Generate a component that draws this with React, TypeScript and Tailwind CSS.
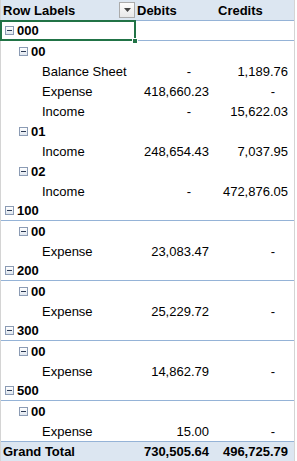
import React from 'react';

type Row = { label: string; level: 0 | 1 | 2; d?: string; c?: string; line?: boolean };

const ROWS: Row[] = [
  { label: '000', level: 0, line: true },
  { label: '00', level: 1 },
  { label: 'Balance Sheet', level: 2, d: '-', c: '1,189.76' },
  { label: 'Expense', level: 2, d: '418,660.23', c: '-' },
  { label: 'Income', level: 2, d: '-', c: '15,622.03' },
  { label: '01', level: 1 },
  { label: 'Income', level: 2, d: '248,654.43', c: '7,037.95' },
  { label: '02', level: 1 },
  { label: 'Income', level: 2, d: '-', c: '472,876.05' },
  { label: '100', level: 0, line: true },
  { label: '00', level: 1 },
  { label: 'Expense', level: 2, d: '23,083.47', c: '-' },
  { label: '200', level: 0, line: true },
  { label: '00', level: 1 },
  { label: 'Expense', level: 2, d: '25,229.72', c: '-' },
  { label: '300', level: 0, line: true },
  { label: '00', level: 1 },
  { label: 'Expense', level: 2, d: '14,862.79', c: '-' },
  { label: '500', level: 0, line: true },
  { label: '00', level: 1 },
  { label: 'Expense', level: 2, d: '15.00', c: '-' },
];

function Minus() {
  return (
    <span className="w-[9px] h-[9px] border border-[#8b9bb4] bg-gradient-to-b from-[#ffffff] to-[#dfe6ef] flex items-center justify-center shrink-0">
      <span className="w-[5px] h-px bg-[#2b3a55]" />
    </span>
  );
}

// accounting format: dash sits further in than the numbers
function Value({ v, bold, dashPad }: { v?: string; bold?: boolean; dashPad: string }) {
  if (!v) return <div />;
  return (
    <div className={`flex items-center justify-end ${v === '-' ? dashPad : 'pr-[6px]'} ${bold ? 'font-bold' : ''}`}>
      {v}
    </div>
  );
}

export default function App() {
  return (
    <div
      className="relative w-[297px] h-[461px] bg-white text-black text-[13px] leading-none overflow-hidden"
      style={{ fontFamily: '"Liberation Sans", Arial, sans-serif' }}
    >
      <div className="w-[295px] border-l border-r border-[#d4d4d4]">
        {/* header */}
        <div className="grid grid-cols-[135px_79px_79px] h-[21px] bg-[#dce6f1] border-b border-[#95b3d7] font-bold">
          <div className="flex items-center justify-between pl-[2px] pr-[1px]">
            <span>Row Labels</span>
            <span className="w-[16px] h-[16px] border border-[#ababab] bg-gradient-to-b from-[#fdfdfd] to-[#e8e8e8] flex items-center justify-center">
              <svg width="7" height="4" viewBox="0 0 7 4">
                <path d="M0 0h7L3.5 4z" fill="#444" />
              </svg>
            </span>
          </div>
          <div className="flex items-center pl-[1px]">Debits</div>
          <div className="flex items-center pl-[3px]">Credits</div>
        </div>

        {ROWS.map((r, i) => (
          <div
            key={i}
            className={`grid grid-cols-[135px_79px_79px] h-[20px] ${r.line ? 'border-b border-[#95b3d7]' : ''}`}
          >
            <div
              className={`flex items-center gap-[3px] ${r.level < 2 ? 'font-bold' : ''} ${
                r.level === 0 ? 'pl-[4px]' : r.level === 1 ? 'pl-[18px]' : 'pl-[41px]'
              }`}
            >
              {r.level < 2 && <Minus />}
              <span>{r.label}</span>
            </div>
            <Value v={r.d} dashPad="pr-[24px]" />
            <Value v={r.c} dashPad="pr-[19px]" />
          </div>
        ))}

        {/* grand total */}
        <div className="grid grid-cols-[135px_79px_79px] h-[20px] bg-[#dce6f1] border-t border-[#95b3d7] font-bold">
          <div className="flex items-center pl-[2px]">Grand Total</div>
          <Value v="730,505.64" bold dashPad="pr-[24px]" />
          <Value v="496,725.79" bold dashPad="pr-[19px]" />
        </div>
      </div>

      {/* selected cell */}
      <div className="absolute left-0 top-[20px] w-[136px] h-[21px] border-2 border-[#217346] pointer-events-none" />
      <div className="absolute left-[132px] top-[38px] w-[6px] h-[6px] bg-[#217346] border border-white" />
    </div>
  );
}
